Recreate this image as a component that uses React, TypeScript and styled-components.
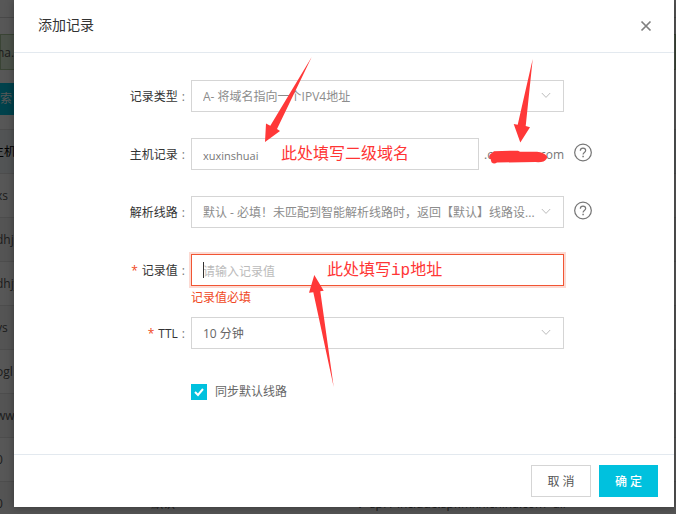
import React, { useState } from "react";
import styled, { createGlobalStyle } from "styled-components";

const sans = `"Open Sans", "Noto Sans CJK SC", sans-serif`;

const GlobalStyle = createGlobalStyle`
  * { box-sizing: border-box; }
  html, body { margin: 0; padding: 0; }
  body { background: #fff; font: 12px/18px ${sans}; color: #333; overflow: hidden; }
  button, input, select { font: inherit; color: inherit; margin: 0; border-radius: 0; }
`;

/* Records page underneath the dialog */
const Backdrop = styled.div`
  position: absolute;
  inset: 0;
  overflow: hidden;
  padding-top: 17px;
  color: #555;
`;
const DomainNotice = styled.div`
  border: 1px solid #a9c69b;
  background: #dff0d8;
  height: 36px;
  line-height: 36px;
  margin-bottom: 13px;
  text-indent: -4px;
`;
const TopRule = styled.div`
  border-top: 1px solid #d5d5d5;
  height: 17px;
`;
const SearchButton = styled.button`
  display: block;
  border: 0;
  background: #00c1de;
  color: #fff;
  width: 60px;
  height: 32px;
  padding: 0;
  text-align: left;
  margin-bottom: 14px;
`;
const Records = styled.table`
  width: 100%;
  border-collapse: collapse;
  table-layout: fixed;
  th, td {
    height: 44px;
    padding: 0;
    border-top: 1px solid #e1e1e1;
    text-align: left;
    font-weight: 400;
    white-space: nowrap;
  }
  th { background: #f0f5f8; color: #000; }
  th:first-child { width: 151px; text-indent: -8px; }
  td:first-child { text-indent: -4px; }
  th:nth-child(2) { width: 206px; }
  tbody tr:nth-child(even) { background: #f7f7f7; }
`;

/* Dialog */
const Mask = styled.div`
  position: relative;
  min-height: 100vh;
  padding: 0 2px 7px 14px;
  background: rgba(0, 0, 0, 0.66);
`;
const Dialog = styled.section`
  background: #fff;
  box-shadow: 0 0 8px rgba(0, 0, 0, 0.35);
`;
const Header = styled.header`
  display: flex;
  align-items: center;
  justify-content: space-between;
  height: 53px;
  padding: 0 22px 0 24px;
  border-bottom: 1px solid #e3e9ef;
`;
const Title = styled.h1`
  margin: 0 0 2px;
  font-size: 14px;
  line-height: 20px;
  font-weight: 400;
  color: #333;
`;
const CloseButton = styled.button`
  display: flex;
  border: 0;
  padding: 0;
  background: none;
  color: #808080;
`;
const Form = styled.form`
  display: flex;
  flex-direction: column;
  gap: 26px;
  padding: 27px 82px 54px 0;
`;
const Row = styled.div<{ $tight?: boolean }>`
  display: grid;
  grid-template-columns: 171px minmax(0, 1fr) 18px;
  column-gap: 6px;
  margin-bottom: ${(p) => (p.$tight ? "-16px" : "0")};
`;
const Label = styled.label`
  text-align: right;
  height: 32px;
  line-height: 34px;
  color: #333;
`;
const Colon = styled.span`
  color: #777;
  margin-left: 4px;
`;
const Required = styled.span`
  color: #f04824;
  margin-right: 4px;
`;
const Field = styled.div`
  position: relative;
  display: flex;
  align-items: center;
  flex-wrap: wrap;
  margin-right: 4px;
`;
const Select = styled.select<{ $tone: string }>`
  appearance: none;
  width: 100%;
  height: 32px;
  padding: 2px 24px 0 11px;
  border: 1px solid #d5d5d5;
  background: #fff;
  color: ${(p) => p.$tone};
  white-space: nowrap;
`;
const Chevron = styled.svg`
  position: absolute;
  right: 13px;
  top: 12px;
  pointer-events: none;
`;
const TextInput = styled.input<{ $invalid?: boolean; $small?: boolean }>`
  flex: 1;
  min-width: 0;
  height: 32px;
  padding: 2px 11px 0;
  outline: 0;
  font-size: ${(p) => (p.$small ? "11px" : "12px")};
  color: #777;
  background: #fff;
  border: 1px solid ${(p) => (p.$invalid ? "#f15533" : "#d5d5d5")};
  box-shadow: ${(p) => (p.$invalid ? "0 0 0 2px #fcdad3" : "none")};
  &::placeholder { color: #bbb; opacity: 1; }
`;
const Caret = styled.span`
  position: absolute;
  left: 12px;
  top: 8px;
  width: 1px;
  height: 16px;
  background: #333;
`;
const ErrorText = styled.p`
  width: 100%;
  margin: 3px 0 0;
  color: #f04824;
`;
const Suffix = styled.span`
  position: relative;
  display: flex;
  justify-content: space-between;
  width: 80px;
  margin-left: 5px;
  padding-top: 2px;
  color: #777;
`;
const HelpButton = styled.button`
  display: flex;
  align-self: start;
  border: 0;
  padding: 0;
  margin-top: 5px;
  background: none;
  color: #777;
`;
const CheckLabel = styled.label`
  display: flex;
  align-items: center;
  gap: 8px;
  height: 16px;
  margin-top: 9px;
  color: #666;
`;
const Checkbox = styled.input`
  appearance: none;
  width: 16px;
  height: 16px;
  border: 1px solid #00c1de;
  background: #fff;
  &:checked {
    background: #00c1de url("data:image/svg+xml,%3Csvg xmlns='http://www.w3.org/2000/svg' viewBox='0 0 14 14'%3E%3Cpath d='M3 7l3 3 5-6' fill='none' stroke='white' stroke-width='2'/%3E%3C/svg%3E");
  }
`;
const Footer = styled.footer`
  display: flex;
  justify-content: flex-end;
  gap: 8px;
  padding: 10px 16px;
  border-top: 1px solid #e3e9ef;
`;
const ActionButton = styled.button<{ $primary?: boolean }>`
  width: ${(p) => (p.$primary ? "59px" : "60px")};
  height: 32px;
  padding: 2px 0 0;
  border: 1px solid ${(p) => (p.$primary ? "#00c1de" : "#d5d5d5")};
  background: ${(p) => (p.$primary ? "#00c1de" : "#fff")};
  color: ${(p) => (p.$primary ? "#fff" : "#555")};
  font-weight: ${(p) => (p.$primary ? 500 : 400)};
`;

/* Red hints drawn over the form */
const Note = styled.span<{ $left: number }>`
  position: absolute;
  left: ${(p) => p.$left}px;
  top: 6px;
  font: 400 16px/22px "Liberation Mono", "Noto Sans CJK SC", monospace;
  white-space: nowrap;
  color: #ff3535;
  pointer-events: none;
`;
const Drawing = styled.svg<{ $left: number; $top: number }>`
  position: absolute;
  z-index: 2;
  left: ${(p) => p.$left}px;
  top: ${(p) => p.$top}px;
  fill: #ff3838;
  pointer-events: none;
`;

const Help = ({ name }: { name: string }) => (
  <HelpButton type="button" aria-label={name}>
    <svg width="19" height="19" viewBox="0 0 19 19" fill="none" stroke="currentColor" strokeWidth="1.3">
      <circle cx="9.5" cy="9.5" r="8.8" />
      <path d="M6.7 7.6C6.7 5.9 7.9 4.9 9.5 4.9s2.8 1 2.8 2.5c0 2-2.7 2.2-2.7 4.2" />
      <path d="M9.6 12.9v1.5" strokeWidth="1.6" />
    </svg>
  </HelpButton>
);

interface PickProps { id: string; tone: string; options: string[] }
const Pick = ({ id, tone, options }: PickProps) => (
  <>
    <Select id={id} $tone={tone}>
      {options.map((o) => <option key={o}>{o}</option>)}
    </Select>
    <Chevron width="10" height="7" viewBox="0 0 10 7" fill="none" stroke="#bcbcbc">
      <path d="M.8 1L5 5.4 9.2 1" />
    </Chevron>
  </>
);

const hosts = ["xs", "dhjs", "dhjy", "ys", "ogl", "www", "0", "0"];

export default function App() {
  const [host, setHost] = useState("xuxinshuai");
  const [value, setValue] = useState("");
  const [sync, setSync] = useState(true);

  return (
    <>
      <GlobalStyle />
      <Backdrop aria-hidden="true">
        <TopRule />
        <DomainNotice>na.</DomainNotice>
        <SearchButton tabIndex={-1}>索</SearchButton>
        <Records>
          <thead><tr><th>主机</th><th /><th /></tr></thead>
          <tbody>
            {hosts.map((h, i) => (
              <tr key={i}>
                <td>{h}</td>
                <td>{i === 7 ? "默认" : ""}</td>
                <td>{i === 7 ? "v=spf1 include:spf.mxhichina.com -all" : ""}</td>
              </tr>
            ))}
          </tbody>
        </Records>
      </Backdrop>
      <Mask>
        <Dialog role="dialog" aria-labelledby="title">
          <Header>
            <Title id="title">添加记录</Title>
            <CloseButton type="button" aria-label="关闭">
              <svg width="12" height="12" viewBox="0 0 12 12" stroke="currentColor" strokeWidth="1.7">
                <path d="M1.5 1.5l9 9M10.5 1.5l-9 9" />
              </svg>
            </CloseButton>
          </Header>
          <Form>
            <Row>
              <Label htmlFor="type">记录类型<Colon>:</Colon></Label>
              <Field><Pick id="type" tone="#8c8c8c" options={["A- 将域名指向一个IPV4地址"]} /></Field>
            </Row>
            <Row>
              <Label htmlFor="host">主机记录<Colon>:</Colon></Label>
              <Field>
                <TextInput id="host" $small value={host} onChange={(e) => setHost(e.target.value)} />
                <Suffix>
                  <span>.c</span><span>com</span>
                  <Drawing $left={4} $top={6} width="60" height="15" viewBox="0 0 60 15">
                    <path d="M6 1.2Q18 .4 30 .8l2 .9h17q7 .8 10 4.5.8 3-3.500 5.300-3 1-8 .6L9 12.500Q6 14.500 3.500 12.200L2.600 9Q0 7.500 2 4.500z" />
                  </Drawing>
                </Suffix>
                <Note $left={90}>此处填写二级域名</Note>
                <Drawing $left={73} $top={-82} width="50" height="88" viewBox="0 0 50 88">
                  <path d="M47.700 1L13 73l3 2L1 86 2 67.500l4.300 2.300z" />
                </Drawing>
                <Drawing $left={321} $top={-80} width="24" height="86" viewBox="0 0 24 86">
                  <path d="M20.700 1l-7 67 4.300 1.300L8.300 84.500 1.700 66l4 .7z" />
                </Drawing>
              </Field>
              <Help name="主机记录说明" />
            </Row>
            <Row>
              <Label htmlFor="line">解析线路<Colon>:</Colon></Label>
              <Field>
                <Pick id="line" tone="#8c8c8c" options={["默认 - 必填！未匹配到智能解析线路时，返回【默认】线路设..."]} />
              </Field>
              <Help name="解析线路说明" />
            </Row>
            <Row $tight>
              <Label htmlFor="value"><Required>*</Required>记录值<Colon>:</Colon></Label>
              <Field>
                <TextInput id="value" $invalid placeholder="请输入记录值" aria-describedby="value-error"
                  value={value} onChange={(e) => setValue(e.target.value)} />
                <Caret />
                <ErrorText id="value-error">记录值必填</ErrorText>
                <Note $left={136}>此处填写ip地址</Note>
                <Drawing $left={117} $top={20} width="27" height="115" viewBox="0 0 27 115">
                  <path d="M6.300 1L15.700 16.700l-3.400.6L25.700 113 5.300 18.300 1 18.700z" />
                </Drawing>
              </Field>
            </Row>
            <Row>
              <Label htmlFor="ttl"><Required>*</Required>TTL<Colon>:</Colon></Label>
              <Field><Pick id="ttl" tone="#666" options={["10 分钟"]} /></Field>
            </Row>
            <Row>
              <span />
              <CheckLabel>
                <Checkbox type="checkbox" checked={sync} onChange={(e) => setSync(e.target.checked)} />
                同步默认线路
              </CheckLabel>
            </Row>
          </Form>
          <Footer>
            <ActionButton type="button">取 消</ActionButton>
            <ActionButton type="button" $primary>确 定</ActionButton>
          </Footer>
        </Dialog>
      </Mask>
    </>
  );
}
